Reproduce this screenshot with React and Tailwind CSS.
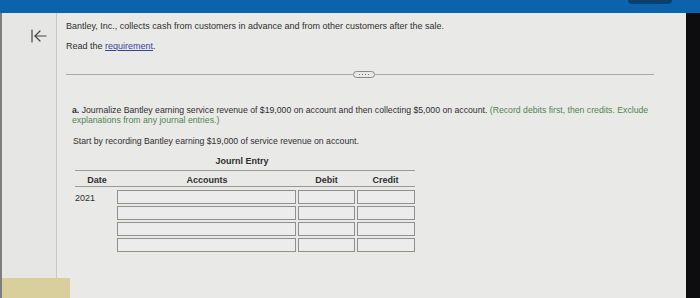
export default function App() {
  const rows = [0, 1, 2, 3];
  return (
    <div
      className="w-[700px] h-[298px] overflow-hidden flex flex-col bg-[#e9e9e8] text-[#2f2f2f]"
      style={{ fontFamily: '"Liberation Sans", Arial, sans-serif' }}
    >
      <div className="h-[13px] bg-[#0b63ad] flex justify-end pr-[28px] shrink-0">
        <div className="w-[44px] h-[4px] bg-[#0a3f70] rounded-b-[5px]" />
      </div>
      <div className="flex flex-1 min-h-0">
        <div className="w-[2px] shrink-0 bg-[#7d7d7d]" />
        <div className="w-[55px] shrink-0 border-r border-[#c8c8c8] flex flex-col justify-between bg-[#e6e6e5]">
          <div className="pt-[16px] pl-[28px]">
            <svg width="18" height="14" viewBox="0 0 18 14" fill="none" stroke="#444" strokeWidth="1.2" strokeLinecap="round" strokeLinejoin="round">
              <path d="M2 1v12" />
              <path d="M16 7H5" />
              <path d="M10 2L5 7l5 5" />
            </svg>
          </div>
          <div className="h-[20px] bg-[#d9cf9d] -mr-[14px]" />
        </div>
        <div className="flex-1 min-w-0 flex flex-col pl-[9px] pr-[32px] text-[9px] leading-[11px]">
          <div className="pt-[8px]">Bantley, Inc., collects cash from customers in advance and from other customers after the sale.</div>
          <div className="pt-[9px]">
            Read the <span className="text-[#3d3fa0] underline">requirement</span>.
          </div>
          <div className="mt-[19px] flex items-center">
            <div className="w-[287px] h-px bg-[#a8a8a8]" />
            <div className="w-[22px] h-[7px] rounded-full border border-[#8a8a8a] flex items-center justify-center gap-[2px]">
              <span className="w-px h-px bg-[#777]" />
              <span className="w-px h-px bg-[#777]" />
              <span className="w-px h-px bg-[#777]" />
              <span className="w-px h-px bg-[#777]" />
            </div>
            <div className="flex-1 h-px bg-[#a8a8a8]" />
          </div>
          <div className="pl-[6px] pt-[27px] leading-[10px] text-[8.7px]">
            <div className="whitespace-nowrap">
              <span className="font-bold">a.</span> Journalize Bantley earning service revenue of $19,000 on account and then collecting $5,000 on account.{" "}
              <span className="text-[#4e8750]">(Record debits first, then credits. Exclude</span>
              <br />
              <span className="text-[#4e8750]">explanations from any journal entries.)</span>
            </div>
            <div className="pt-[11px] pl-[1px]">Start by recording Bantley earning $19,000 of service revenue on account.</div>
            <div className="w-[340px] mt-[10px] ml-[3px] leading-[11px] text-[9px]">
              <div className="text-center font-bold pb-[3px] pr-[6px]">Journl Entry</div>
              <div className="border-t border-[#9a9a9a] flex font-bold h-[17px] items-center border-b">
                <div className="w-[42px] text-center pt-[3px] pl-[2px]">Date</div>
                <div className="w-[180px] text-center pt-[3px]">Accounts</div>
                <div className="w-[59px] text-center pt-[3px]">Debit</div>
                <div className="w-[59px] text-center pt-[3px]">Credit</div>
              </div>
              <div className="flex flex-col gap-[2px] pt-[3px]">
                {rows.map((r) => (
                  <div key={r} className="flex h-[14px]">
                    <div className="w-[42px] pl-[0px] pt-[3px]">{r === 0 ? "2021" : ""}</div>
                    <div className="w-[179px] border border-[#8f8f8f] bg-[#ececec] mr-[2px]" />
                    <div className="w-[57px] border border-[#8f8f8f] bg-[#ececec] mr-[2px]" />
                    <div className="w-[58px] border border-[#8f8f8f] bg-[#ececec]" />
                  </div>
                ))}
              </div>
            </div>
          </div>
        </div>
        <div className="w-[14px] shrink-0 bg-[#0d0d0f]" />
      </div>
    </div>
  );
}
